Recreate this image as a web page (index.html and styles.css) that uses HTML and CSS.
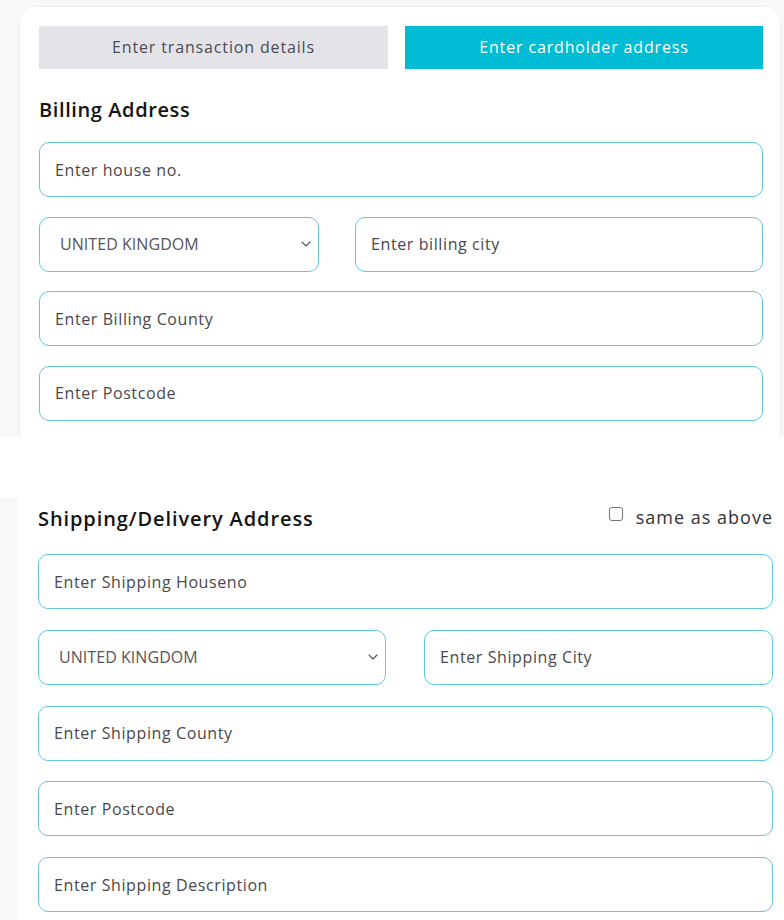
FILE: index.html
```html
<!DOCTYPE html>
<html lang="en">
<head>
<meta charset="utf-8">
<title>Cardholder address</title>
<link rel="stylesheet" href="styles.css">
</head>
<body>
<section class="shot shot-top">
  <div class="card card-top">
    <div class="tabs">
      <button class="tab tab-first" type="button">Enter transaction details</button>
      <button class="tab tab-active" type="button">Enter cardholder address</button>
    </div>
    <h2 class="section-title title-billing">Billing Address</h2>
    <div class="fields fields-billing">
      <input class="field" type="text" placeholder="Enter house no.">
      <div class="field-row row-billing">
        <div class="select-wrap">
          <select class="field select"><option>UNITED KINGDOM</option></select>
          <svg class="chevron" viewBox="0 0 10 6" width="10" height="6"><path d="M1 1 L5 5 L9 1" fill="none" stroke="#555" stroke-width="1.1" stroke-linecap="round" stroke-linejoin="round"/></svg>
        </div>
        <input class="field" type="text" placeholder="Enter billing city">
      </div>
      <input class="field" type="text" placeholder="Enter Billing County">
      <input class="field" type="text" placeholder="Enter Postcode">
    </div>
  </div>
</section>
<section class="shot shot-bottom">
  <div class="card card-bottom">
    <div class="title-row">
      <h2 class="section-title">Shipping/Delivery Address</h2>
      <label class="same"><input class="check" type="checkbox"><span>same as above</span></label>
    </div>
    <div class="fields fields-shipping">
      <input class="field" type="text" placeholder="Enter Shipping Houseno">
      <div class="field-row row-shipping">
        <div class="select-wrap">
          <select class="field select"><option>UNITED KINGDOM</option></select>
          <svg class="chevron" viewBox="0 0 10 6" width="10" height="6"><path d="M1 1 L5 5 L9 1" fill="none" stroke="#555" stroke-width="1.1" stroke-linecap="round" stroke-linejoin="round"/></svg>
        </div>
        <input class="field" type="text" placeholder="Enter Shipping City">
      </div>
      <input class="field" type="text" placeholder="Enter Shipping County">
      <input class="field" type="text" placeholder="Enter Postcode">
      <input class="field" type="text" placeholder="Enter Shipping Description">
    </div>
  </div>
</section>
</body>
</html>
```
FILE: styles.css
```css
* { box-sizing: border-box; }
html, body { margin: 0; padding: 0; }
body {
  width: 784px;
  height: 920px;
  overflow: hidden;
  background: #ffffff;
  font-family: "Open Sans", "Noto Sans", sans-serif;
  color: #333;
}

.shot-top {
  height: 437px;
  background: #f8f8f9;
  padding: 6px 3px 0 19px;
}
.card {
  background: #ffffff;
}
.card-top {
  height: 100%;
  border-radius: 16px 16px 0 0;
  border: 1px solid #f0f0f2;
  border-bottom: none;
  padding: 19px 17px 0 19px;
}

.tabs {
  display: flex;
  gap: 17px;
}
.tab {
  height: 43px;
  border: none;
  border-radius: 0;
  font-family: inherit;
  font-size: 16px;
  letter-spacing: 0.85px;
  padding: 0 0 1px;
}
.tab-first {
  width: 349px;
  background: #e4e4e8;
  color: #4a4a57;
}
.tab-active {
  width: 358px;
  background: #00bcd5;
  color: #ffffff;
}

.section-title {
  margin: 0;
  font-size: 20px;
  font-weight: 600;
  line-height: 28px;
  letter-spacing: 0.6px;
  color: #141414;
}
.title-row .section-title {
  letter-spacing: 0.9px;
}
.title-billing {
  margin: 27px 0 18px;
}

.fields {
  display: flex;
  flex-direction: column;
}
.fields-billing { gap: 19.5px; }
.fields-shipping { gap: 20.75px; }

.field {
  display: block;
  width: 100%;
  height: 55px;
  border: 1px solid #62c8dc;
  border-radius: 10px;
  background: #ffffff;
  padding: 0 15px;
  font-family: inherit;
  font-size: 16px;
  letter-spacing: 0.6px;
  color: #444;
  outline: none;
}
.field::placeholder {
  color: #48484c;
  opacity: 1;
}

.field-row {
  display: grid;
}
.row-billing {
  grid-template-columns: 280px 408px;
  column-gap: 36px;
}
.row-shipping {
  grid-template-columns: 348px 349px;
  column-gap: 38px;
}

.select-wrap {
  position: relative;
}
.select {
  appearance: none;
  -webkit-appearance: none;
  padding-left: 20px;
  font-size: 16px;
  letter-spacing: 0.05px;
  color: #55555a;
}
.chevron {
  position: absolute;
  right: 8px;
  top: 24px;
  pointer-events: none;
}

.shot-bottom {
  margin-top: 60px;
  height: 423px;
  background: #f8f8f9;
  padding-left: 17px;
}
.card-bottom {
  height: 100%;
  padding: 8px 11px 0 21px;
}
.title-row {
  display: flex;
  justify-content: space-between;
  align-items: center;
  margin-bottom: 21px;
}
.same {
  display: flex;
  align-items: center;
  gap: 13px;
  font-size: 18px;
  letter-spacing: 1px;
  color: #333;
  margin-top: -4px;
}
.check {
  appearance: none;
  -webkit-appearance: none;
  width: 14px;
  height: 14px;
  margin: 0;
  border: 1px solid #767676;
  border-radius: 3px;
  background: #fff;
  position: relative;
  top: -3px;
}
```
